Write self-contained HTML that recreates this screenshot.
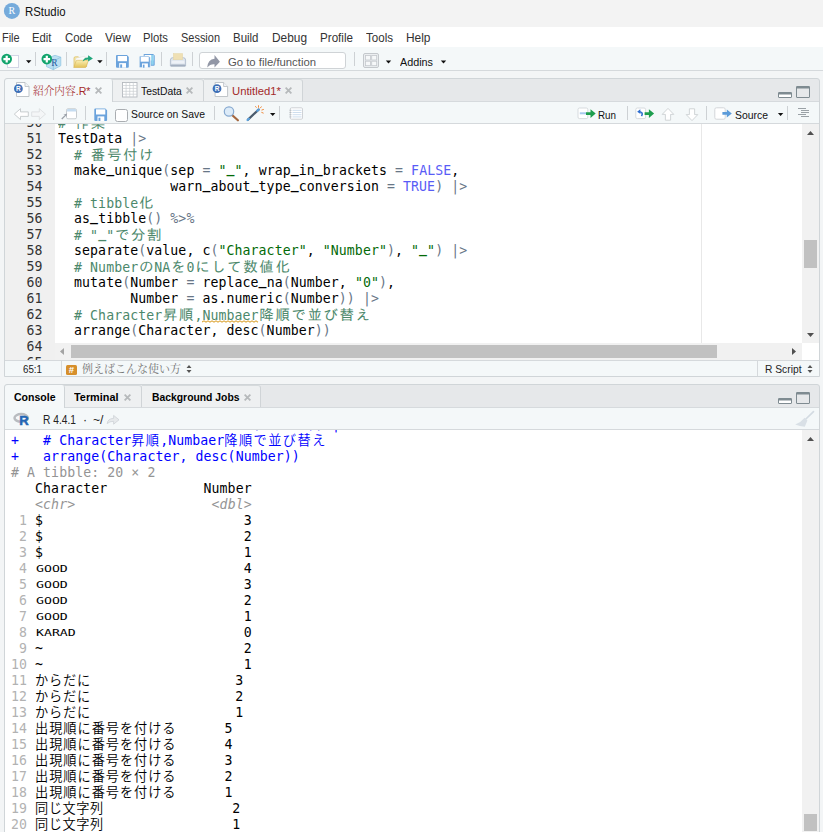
<!DOCTYPE html>
<html lang="ja">
<head>
<meta charset="utf-8">
<title>RStudio</title>
<style>
*{box-sizing:border-box;margin:0;padding:0}
html,body{width:823px;height:832px;overflow:hidden;background:#f3f5f6}
body{position:relative;font-family:"Liberation Sans","Noto Sans CJK JP",sans-serif;font-size:12px;color:#000}
.a,.t{position:absolute}
.t{white-space:nowrap}
#title{left:0;top:0;width:823px;height:27px;background:#f3f3f3}
#menu{left:0;top:27px;width:823px;height:20px;background:#fff}
#tbar{left:0;top:47px;width:823px;height:24px;background:#f4f8f9;border-bottom:1px solid #d5d9dc}
.sep{position:absolute;width:1px;background:#cdd1d4}
.panel{position:absolute;border:1px solid #d0d5d8;border-radius:3px 3px 0 0;background:#e6e8ea}
.tabA{position:absolute;background:#f5f8f9;border-right:1px solid #cfd4d7;border-radius:3px 3px 0 0}
.tabI{position:absolute;background:#eef0f1;border-right:1px solid #d0d4d7;border-top:1px solid #d6dadc;border-radius:0 3px 0 0}.hl{position:absolute;left:5px;width:814px;height:1px;background:#d6dadd}
.ptb{position:absolute;background:#f4f8f9;border-bottom:1px solid #d5d9dc}
.x{position:absolute;font-size:13px;color:#b0b3b6;line-height:14px;font-family:"Liberation Sans",sans-serif}
#ed{left:5px;top:124px;width:814px;height:236px;background:#fff;overflow:hidden}
#gut{left:0;top:0;width:49.700px;height:236px;background:#f0f0f0}
#gut div{position:absolute;left:0;width:37.500px;text-align:right;height:16px;line-height:16px;color:#333}
#code{left:53px;top:0;width:744px;height:220px;overflow:hidden}
#code div{position:absolute;left:0;height:16px;line-height:16px}
.mono{font-family:"DejaVu Sans Mono","Liberation Mono","IPAGothic",monospace;font-size:13.2px;white-space:pre;letter-spacing:0.083px}
.c{color:#4c886b}.s{color:#036a07}.k{color:#585cf6}.o{color:#687687}
.j{display:inline-block;width:16.060px;text-align:center;font-family:"IPAGothic",monospace;font-size:14.500px;letter-spacing:0}
.u{position:relative;top:-2.500px;font-weight:bold}.sq{position:relative}.sq svg{position:absolute;left:0;top:12.200px}
#con{left:5px;top:430px;width:797px;height:402px;background:#fff;overflow:hidden;font-family:"DejaVu Sans Mono","Liberation Mono","Noto Sans CJK JP",monospace;font-size:13.2px;letter-spacing:0.083px}
#con div{position:absolute;left:6px;height:16px;line-height:16px;white-space:pre}
.b{color:#0000ff}.g{color:#949494}.g2{color:#b2b2b2}.i{font-style:italic}
.w{display:inline-block;letter-spacing:0}.w span{display:inline-block;font-size:9.300px;letter-spacing:0;transform:scaleX(1.420);transform-origin:0 50%;position:relative;top:-1px;left:.5px;}
.jc{letter-spacing:0.750px;font-weight:350}
</style>
</head>
<body>
<div id="title" class="a">
  <svg class="a" style="left:3px;top:2px" width="18" height="18" viewBox="0 0 18 18"><circle cx="8.900" cy="8.900" r="8" fill="#75aadb"/><text x="8.900" y="12.300" font-family="'Liberation Serif',serif" font-size="10" fill="#fff" text-anchor="middle">R</text></svg>
</div>
<div id="menu" class="a"></div>
<div id="tbar" class="a">
  <div class="sep" style="left:35px;top:5px;height:14px"></div>
  <div class="sep" style="left:66px;top:5px;height:14px"></div>
  <div class="sep" style="left:106px;top:5px;height:14px"></div>
  <div class="sep" style="left:161px;top:5px;height:14px"></div>
  <div class="sep" style="left:192px;top:5px;height:14px"></div>
  <div class="a" style="left:199px;top:5px;width:147px;height:17px;background:#fff;border:1px solid #cfd3d6;border-radius:3px"></div>
  <div class="sep" style="left:354px;top:5px;height:14px"></div>
</div>

<!-- source panel -->
<div class="panel" style="left:4px;top:78px;width:816px;height:299px"></div>
<div class="hl" style="top:101px"></div>
<div class="tabI" style="left:112px;top:79px;width:92px;height:22px"></div>
<div class="tabI" style="left:204px;top:79px;width:99px;height:22px"></div>
<div class="tabA" style="left:5px;top:79px;width:108px;height:23px"></div>
<svg class="a" style="left:95.3px;top:86.7px" width="7" height="7"><path d="M.6 .6l5.800 5.800M6.400 .6l-5.800 5.800" stroke="#b6b9bb" stroke-width="1.800"/></svg>
<svg class="a" style="left:186.3px;top:86.7px" width="7" height="7"><path d="M.6 .6l5.800 5.800M6.400 .6l-5.800 5.800" stroke="#b6b9bb" stroke-width="1.800"/></svg>
<svg class="a" style="left:285.3px;top:86.7px" width="7" height="7"><path d="M.6 .6l5.800 5.800M6.400 .6l-5.800 5.800" stroke="#b6b9bb" stroke-width="1.800"/></svg>
<div class="ptb" style="left:5px;top:102px;width:814px;height:22px">
  <div class="sep" style="left:48px;top:4px;height:14px"></div>
  <div class="sep" style="left:80px;top:4px;height:14px"></div>
  <div class="sep" style="left:209px;top:4px;height:14px"></div>
  <div class="sep" style="left:274.400px;top:4px;height:14px"></div>
  <div class="sep" style="left:622px;top:4px;height:14px"></div>
  <div class="sep" style="left:701px;top:4px;height:14px"></div>
  <div class="sep" style="left:782px;top:4px;height:14px"></div>
  <div class="a" style="left:110.400px;top:7.400px;width:12.400px;height:12.400px;background:#fff;border:1px solid #a9adb1;border-radius:2.500px"></div>
</div>
<div id="ed" class="a">
  <div id="gut" class="a mono">
<div style="top:-9px">50</div>
<div style="top:7px">51</div>
<div style="top:23px">52</div>
<div style="top:39px">53</div>
<div style="top:55px">54</div>
<div style="top:71px">55</div>
<div style="top:87px">56</div>
<div style="top:103px">57</div>
<div style="top:119px">58</div>
<div style="top:135px">59</div>
<div style="top:151px">60</div>
<div style="top:167px">61</div>
<div style="top:183px">62</div>
<div style="top:199px">63</div>
<div style="top:215px">64</div>
<div style="top:231px">65</div>
  </div>
  <div class="a" style="left:695.600px;top:0;width:1px;height:220px;background:#e8e8e8"></div>
  <div id="code" class="a mono">
<div style="top:-9px"><span class="c"># <span class="j">作</span><span class="j">業</span></span></div>
<div style="top:7px">TestData <span class="o">|&gt;</span></div>
<div style="top:23px">  <span class="c"># <span class="j">番</span><span class="j">号</span><span class="j">付</span><span class="j">け</span></span></div>
<div style="top:39px">  make<span class="u">_</span>unique<span class="o">(</span>sep <span class="o">=</span> <span class="s">"<span class="u">_</span>"</span>, wrap<span class="u">_</span>in<span class="u">_</span>brackets <span class="o">=</span> <span class="k">FALSE</span>,</div>
<div style="top:55px">              warn<span class="u">_</span>about<span class="u">_</span>type<span class="u">_</span>conversion <span class="o">=</span> <span class="k">TRUE</span><span class="o">)</span> <span class="o">|&gt;</span></div>
<div style="top:71px">  <span class="c"># tibble<span class="j">化</span></span></div>
<div style="top:87px">  as<span class="u">_</span>tibble<span class="o">()</span> <span class="o">%&gt;%</span></div>
<div style="top:103px">  <span class="c"># "<span class="u">_</span>"<span class="j">で</span><span class="j">分</span><span class="j">割</span></span></div>
<div style="top:119px">  separate<span class="o">(</span>value, c<span class="o">(</span><span class="s">"Character"</span>, <span class="s">"Number"</span><span class="o">)</span>, <span class="s">"<span class="u">_</span>"</span><span class="o">)</span> <span class="o">|&gt;</span></div>
<div style="top:135px">  <span class="c"># Number<span class="j">の</span>NA<span class="j">を</span>0<span class="j">に</span><span class="j">し</span><span class="j">て</span><span class="j">数</span><span class="j">値</span><span class="j">化</span></span></div>
<div style="top:151px">  mutate<span class="o">(</span>Number <span class="o">=</span> replace<span class="u">_</span>na<span class="o">(</span>Number, <span class="s">"0"</span><span class="o">)</span>,</div>
<div style="top:167px">         Number <span class="o">=</span> as.numeric<span class="o">(</span>Number<span class="o">))</span> <span class="o">|&gt;</span></div>
<div style="top:183px">  <span class="c"># Character<span class="j">昇</span><span class="j">順</span>,<span class="sq">Numbaer<svg width="57" height="4"><path d="M0 2L2 0.8L4 2.2L6 0.8L8 2.2L10 0.8L12 2.2L14 0.8L16 2.2L18 0.8L20 2.2L22 0.8L24 2.2L26 0.8L28 2.2L30 0.8L32 2.2L34 0.8L36 2.2L38 0.8L40 2.2L42 0.8L44 2.2L46 0.8L48 2.2L50 0.8L52 2.2L54 0.8L56 2.2" fill="none" stroke="#dda83c" stroke-width="1.100"/></svg></span><span class="j">降</span><span class="j">順</span><span class="j">で</span><span class="j">並</span><span class="j">び</span><span class="j">替</span><span class="j">え</span></span></div>
<div style="top:199px">  arrange<span class="o">(</span>Character, desc<span class="o">(</span>Number<span class="o">))</span></div>
<div style="top:231px"><span class="c"># <span class="j">例</span><span class="j">え</span><span class="j">ば</span><span class="j">こ</span><span class="j">ん</span><span class="j">な</span><span class="j">使</span><span class="j">い</span><span class="j">方</span> ----</span></div>
  </div>
  <!-- h scrollbar -->
  <div class="a" style="left:50px;top:219px;width:747px;height:17px;background:#f1f1f1"></div>
  <div class="a" style="left:66px;top:221px;width:646px;height:13px;background:#c1c1c1"></div>
  <svg class="a" style="left:49px;top:219px" width="17" height="17"><path d="M6 8.5 L10 5 L10 12 Z" fill="#a3a3a3"/></svg>
  <svg class="a" style="left:780px;top:219px" width="17" height="17"><path d="M11 8.5 L7 5 L7 12 Z" fill="#505050"/></svg>
  <!-- v scrollbar -->
  <div class="a" style="left:797px;top:0;width:17px;height:219px;background:#f1f1f1"></div>
  <div class="a" style="left:799px;top:116px;width:13px;height:28px;background:#c1c1c1"></div>
  <svg class="a" style="left:797px;top:1px" width="17" height="17"><path d="M8.5 6 L12 10 L5 10 Z" fill="#505050"/></svg>
  <svg class="a" style="left:797px;top:202px" width="17" height="17"><path d="M8.5 11 L12 7 L5 7 Z" fill="#505050"/></svg>
  <div class="a" style="left:797px;top:219px;width:17px;height:17px;background:#fff"></div>
</div>
<!-- status bar -->
<div class="a" style="left:5px;top:360px;width:814px;height:16px;background:#f4f8f9;border-top:1px solid #d5d9dc"></div>
<div class="sep" style="left:61px;top:361px;height:15px;background:#d5d9dc"></div>
<div class="sep" style="left:757px;top:361px;height:15px;background:#d5d9dc"></div>
<div class="a" style="left:66px;top:364.500px;width:11px;height:10.500px;background:#d68f2b;border-radius:1.500px;color:#fff;font-size:9.500px;line-height:10.500px;text-align:center;font-weight:bold">#</div>

<!-- console panel -->
<div class="panel" style="left:4px;top:384px;width:816px;height:460px"></div>
<div class="hl" style="top:407px"></div>
<div class="tabI" style="left:64px;top:385px;width:78px;height:22px"></div>
<div class="tabI" style="left:142px;top:385px;width:119px;height:22px"></div>
<div class="tabA" style="left:5px;top:385px;width:60px;height:23px"></div>
<svg class="a" style="left:124.3px;top:393.8px" width="7" height="7"><path d="M.6 .6l5.800 5.800M6.400 .6l-5.800 5.800" stroke="#b6b9bb" stroke-width="1.800"/></svg>
<svg class="a" style="left:244.3px;top:393.8px" width="7" height="7"><path d="M.6 .6l5.800 5.800M6.400 .6l-5.800 5.800" stroke="#b6b9bb" stroke-width="1.800"/></svg>
<div class="ptb" style="left:5px;top:408px;width:814px;height:22px"></div>
<div id="con" class="a">
<div style="top:-13px"><span class="b">+          Number = as.numeric(Number)) |&gt;</span></div>
<div style="top:3px"><span class="b">+   # Character<span class="jc" style="letter-spacing:1.2px">昇順</span>,Numbaer<span class="jc" style="letter-spacing:1.45px">降順で並び替え</span></span></div>
<div style="top:19px"><span class="b">+   arrange(Character, desc(Number))</span></div>
<div style="top:35px"><span class="g"># A tibble: 20 × 2</span></div>
<div style="top:51px">   Character            Number</div>
<div style="top:67px">   <span class="g"><span class="i">&lt;chr&gt;</span></span>                 <span class="g"><span class="i">&lt;dbl&gt;</span></span></div>
<div style="top:83px"><span class="g2"> 1</span> $                         3</div>
<div style="top:99px"><span class="g2"> 2</span> $                         2</div>
<div style="top:115px"><span class="g2"> 3</span> $                         1</div>
<div style="top:131px"><span class="g2"> 4</span> <span class="w" style="width:32.12px"><span>GOOD</span></span>                      4</div>
<div style="top:147px"><span class="g2"> 5</span> <span class="w" style="width:32.12px"><span>GOOD</span></span>                      3</div>
<div style="top:163px"><span class="g2"> 6</span> <span class="w" style="width:32.12px"><span>GOOD</span></span>                      2</div>
<div style="top:179px"><span class="g2"> 7</span> <span class="w" style="width:32.12px"><span>GOOD</span></span>                      1</div>
<div style="top:195px"><span class="g2"> 8</span> <span class="w" style="width:40.15px"><span>KARAD</span></span>                     0</div>
<div style="top:211px"><span class="g2"> 9</span> ~                         2</div>
<div style="top:227px"><span class="g2">10</span> ~                         1</div>
<div style="top:243px"><span class="g2">11</span> <span class="jc" style="letter-spacing:0.75px">からだに</span>                  3</div>
<div style="top:259px"><span class="g2">12</span> <span class="jc" style="letter-spacing:0.75px">からだに</span>                  2</div>
<div style="top:275px"><span class="g2">13</span> <span class="jc" style="letter-spacing:0.75px">からだに</span>                  1</div>
<div style="top:291px"><span class="g2">14</span> <span class="jc" style="letter-spacing:0.95px">出現順に番号を付ける</span>      5</div>
<div style="top:307px"><span class="g2">15</span> <span class="jc" style="letter-spacing:0.95px">出現順に番号を付ける</span>      4</div>
<div style="top:323px"><span class="g2">16</span> <span class="jc" style="letter-spacing:0.95px">出現順に番号を付ける</span>      3</div>
<div style="top:339px"><span class="g2">17</span> <span class="jc" style="letter-spacing:0.95px">出現順に番号を付ける</span>      2</div>
<div style="top:355px"><span class="g2">18</span> <span class="jc" style="letter-spacing:0.95px">出現順に番号を付ける</span>      1</div>
<div style="top:371px"><span class="g2">19</span> <span class="jc" style="letter-spacing:0.55px">同じ文字列</span>                2</div>
<div style="top:387px"><span class="g2">20</span> <span class="jc" style="letter-spacing:0.55px">同じ文字列</span>                1</div>
</div>
<div class="a" style="left:802px;top:430px;width:17px;height:402px;background:#f1f1f1"></div>
<svg class="a" style="left:802px;top:431px" width="17" height="17"><path d="M8.5 6 L12 10 L5 10 Z" fill="#505050"/></svg>
<div class="a" style="left:804px;top:814px;width:13px;height:17px;background:#c1c1c1"></div>
<!-- main toolbar icons -->
<svg class="a" style="left:0;top:47px" width="460" height="24" viewBox="0 47 460 24">
  <defs><linearGradient id="fg" x1="0" y1="0" x2="0" y2="1"><stop offset="0" stop-color="#faefb4"/><stop offset="1" stop-color="#e3c258"/></linearGradient></defs>
  <!-- new file -->
  <rect x="7.5" y="55.5" width="11" height="12" fill="#fff" stroke="#d3d6e6"/>
  <circle cx="6.700" cy="59.100" r="5.300" fill="#10a46c"/>
  <path d="M3.400 59.100H10M6.700 55.800V62.400" stroke="#fff" stroke-width="2.200"/>
  <path d="M26 60.3h5.4l-2.7 3z" fill="#111"/>
  <!-- new project -->
  <path d="M46.500 58.500l8.500-3.200 5.800 1.900v8.500l-7.500 4-6.800-3.100z" fill="#b9dff2" stroke="#84bfe0" stroke-width=".7" opacity=".92"/>
  <path d="M46.500 58.500l6.800 2.700 7.500-4M53.300 61.200v8.500" stroke="#84bfe0" stroke-width=".7" fill="none"/>
  <text x="51.200" y="65.600" font-family="'Liberation Serif',serif" font-size="9.500" fill="#2a5da3">R</text>
  <circle cx="46.800" cy="59.100" r="5.300" fill="#10a46c"/>
  <path d="M43.500 59.100H50.100M46.800 55.800V62.400" stroke="#fff" stroke-width="2.200"/>
  <!-- open folder -->
  <path d="M74 66.500v-8.300q0-1.400 1.400-1.400h3l1.300 1.300h5.700q1.200 0 1.200 1.200v7.200z" fill="#f6e9ac" stroke="#d9ba5c" stroke-width=".7"/>
  <path d="M76 58.200l8.800-2 1.700 9.300h-10.500z" fill="#fbfbfb" stroke="#d8d8d8" stroke-width=".4"/>
  <path d="M73.700 67.500l2.400-6.500q.3-.7 1.100-.7h10.300q.9 0 .6.900l-2 5.700q-.2.600-1 .6z" fill="url(#fg)" stroke="#d8b450" stroke-width=".6"/>
  <path d="M82.700 61.400q.9-3.900 5.400-4v-2.100l4.800 3.100-4.800 3.100v-2q-3.200-.1-5.400 1.900z" fill="#1fa67b"/>
  <path d="M97.200 60.300h5.400l-2.700 3z" fill="#111"/>
  <!-- save -->
  <g><path d="M116 56.100q0-1 1-1h10l1.800 1.800v9.800q0 1-1 1h-10.800q-1 0-1-1z" fill="#6ba3dc"/><rect x="117.700" y="56" width="9.300" height="5.200" fill="#fff"/><rect x="119.200" y="63.100" width="6.800" height="4.600" fill="#fff"/><rect x="120.200" y="64.400" width="1.900" height="3.300" fill="#6ba3dc"/></g>
  <!-- save all -->
  <path d="M143.500 55q0-1 1-1h8.600l1.600 1.600v9.200q0 1-1 1h-9.200q-1 0-1-1z" fill="#6ba3dc"/>
  <rect x="145" y="55" width="8.500" height="5.500" fill="#fff"/>
  <rect x="151.200" y="55" width="2.500" height="9.800" fill="#8fd3ef"/>
  <g transform="translate(139.200,56) scale(.87,.93) translate(-116,-55.100)"><path d="M116 56.100q0-1 1-1h10l1.800 1.800v9.800q0 1-1 1h-10.800q-1 0-1-1z" fill="#6ba3dc" stroke="#f4f8f9" stroke-width=".9"/><rect x="117.700" y="56" width="9.300" height="5.200" fill="#fff"/><rect x="119.200" y="63.100" width="6.800" height="4.600" fill="#fff"/><rect x="120.200" y="64.400" width="1.900" height="3.300" fill="#6ba3dc"/></g>
  <!-- print -->
  <path d="M170.400 66v-6q0-2.300 2.300-2.300h10.600q2.300 0 2.300 2.300v6z" fill="#dde4ed" stroke="#aab6c7" stroke-width=".8"/>
  <rect x="173.300" y="53.500" width="9.400" height="6.300" fill="#efe0b4" stroke="#e2d2a2" stroke-width=".4"/>
  <rect x="171.600" y="60.800" width="12.800" height="2.600" rx="1" fill="#eef2f7"/>
  <rect x="170.800" y="64.600" width="14.400" height="2" rx=".6" fill="#a3afc0"/>
  <!-- goto arrow -->
  <path d="M207.200 67.600Q207.800 59.400 214.500 58.800V54.900L219.900 61.800L214.500 67.400V64.200Q210 63.900 207.200 67.600Z" fill="#9297a6"/>
  <!-- grid -->
  <rect x="363.5" y="53.5" width="15" height="14" rx="1.5" fill="#eceff1" stroke="#c4c8cc"/>
  <rect x="365.5" y="55.5" width="5" height="4.500" fill="#f6f8f9" stroke="#c4c8cc" stroke-width=".8"/>
  <rect x="371.700" y="55.5" width="5" height="4.500" fill="#f6f8f9" stroke="#c4c8cc" stroke-width=".8"/>
  <rect x="365.5" y="61.200" width="5" height="4.500" fill="#f6f8f9" stroke="#c4c8cc" stroke-width=".8"/>
  <rect x="371.700" y="61.200" width="5" height="4.500" fill="#f6f8f9" stroke="#c4c8cc" stroke-width=".8"/>
  <path d="M385.800 60.400h5.400l-2.700 3z" fill="#111"/>
  <path d="M440.800 60.400h5.400l-2.700 3z" fill="#111"/>
</svg>
<!-- source tab icons -->
<svg class="a" style="left:0;top:78px" width="823" height="48" viewBox="0 78 823 48">
  <!-- Rdoc icon 1 -->
  <g id="rdoc">
  <path d="M16.500 82.500h8.500l4 4v10h-12.500z" fill="#fff" stroke="#b9bec3" stroke-width=".9"/>
  <path d="M25 82.500v4h4" fill="#f1f3f5" stroke="#b9bec3" stroke-width=".8"/>
  <circle cx="18.400" cy="88.700" r="4.400" fill="#3e6fb6"/>
  <text x="18.400" y="91.200" font-family="'Liberation Sans',sans-serif" font-weight="bold" font-size="6.500" fill="#fff" text-anchor="middle">R</text>
  </g>
  <g transform="translate(198.600,0)">
  <path d="M16.500 82.500h8.500l4 4v10h-12.500z" fill="#fff" stroke="#b9bec3" stroke-width=".9"/>
  <path d="M25 82.500v4h4" fill="#f1f3f5" stroke="#b9bec3" stroke-width=".8"/>
  <circle cx="18.400" cy="88.700" r="4.400" fill="#3e6fb6"/>
  <text x="18.400" y="91.200" font-family="'Liberation Sans',sans-serif" font-weight="bold" font-size="6.500" fill="#fff" text-anchor="middle">R</text>
  </g>
  <!-- grid icon -->
  <rect x="122.500" y="82.500" width="14.500" height="14.500" fill="#fff" stroke="#b4b9be" stroke-width=".9"/>
  <path d="M122.500 85.500h14.500M122.500 88.400h14.500M122.500 91.300h14.500M122.500 94.200h14.500M126.100 82.500v14.500M129.700 82.500v14.500M133.300 82.500v14.500" stroke="#c9cdd1" stroke-width=".7"/>
  <!-- min / max -->
  <g id="mm" fill="none" stroke="#7f8b91">
  <rect x="778.500" y="92.500" width="13" height="5" rx=".4" fill="#fff"/><path d="M778.500 93.500h13" stroke-width="2"/>
  <rect x="796.500" y="86.500" width="13" height="11" rx=".4"/><path d="M796.500 87.500h13" stroke-width="2"/>
  </g>
  <!-- back / fwd -->
  <path d="M14.300 114.100l6.200-5.400v3.200h7.800v4.500h-7.800v3.200z" fill="#fff" stroke="#c3c7ca" stroke-width=".9"/>
  <path d="M45.500 114.100l-6.200-5.400v3.200h-7.600v4.500h7.600v3.200z" fill="#f4f6f7" stroke="#dcdfe1" stroke-width=".9"/>
  <!-- show in new window -->
  <rect x="66.500" y="108.800" width="10" height="10" rx="1.500" fill="#fff" stroke="#c1c6cb" stroke-width=".9"/>
  <path d="M67 111.500v-1.200q0-1.300 1.300-1.300h6.400q1.300 0 1.300 1.300v1.200z" fill="#c5dcf0"/>
  <path d="M61.300 118.600l3.700-3.700-1.800-.1 4-1.200-1.100 4-.2-1.800-3.700 3.700z" fill="#9aa0a8"/>
  <!-- save -->
  <g transform="translate(-21.700,53.300)"><path d="M116 56.100q0-1 1-1h10l1.800 1.800v9.800q0 1-1 1h-10.800q-1 0-1-1z" fill="#6ba3dc"/><rect x="117.700" y="56" width="9.300" height="5.200" fill="#fff"/><rect x="119.200" y="63.100" width="6.800" height="4.600" fill="#fff"/><rect x="120.200" y="64.400" width="1.900" height="3.300" fill="#6ba3dc"/></g>
  <!-- magnifier -->
  <path d="M232.300 115.300l5.600 5" stroke="#a5673f" stroke-width="2.200" stroke-linecap="round"/>
  <circle cx="229" cy="111.500" r="4.700" fill="#dcebf8" stroke="#86a9d0" stroke-width="1.200"/>
  <!-- wand -->
  <path d="M248 119.600l10.600-10" stroke="#4b5b6c" stroke-width="2.200" stroke-linecap="round"/>
  <path d="M247.600 120l1.300-1.200M257.300 110.800l1.300-1.200" stroke="#5aa0dc" stroke-width="2.200" stroke-linecap="round"/>
  <path d="M258.500 105.300v2.400M261.500 106.500l-1.300 1.700M263.800 109.400l-2.300.7M263.600 113.200l-2.200-.9M255.300 106.200l1.200 1.500" stroke="#f08a3c" stroke-width="1"/>
  <path d="M270 113h5.400l-2.700 3z" fill="#111"/>
  <!-- list icon -->
  <rect x="290.300" y="107.800" width="12.200" height="11.400" rx="1.200" fill="#fff" stroke="#c9cdd1" stroke-width=".9"/>
  <path d="M292.500 110.300h9M292.500 112.500h9M292.500 114.700h9M292.500 116.900h9" stroke="#c2d6ea" stroke-width=".8"/>
  <path d="M289.500 110.300h2M289.500 112.500h2M289.500 114.700h2M289.500 116.900h2" stroke="#b0b5ba" stroke-width=".8"/>
  <!-- run -->
  <rect x="578" y="108" width="9.800" height="10.600" rx="1.500" fill="#fff" stroke="#d3d7da" stroke-width=".9"/>
  <rect x="579.800" y="112.300" width="6.500" height="2" fill="#a8c9ee"/>
  <path d="M586 112.200h4.500v-2.900l5.200 4.300-5.200 4.300v-2.900h-4.500z" fill="#1e9e4e"/>
  <!-- rerun -->
  <rect x="635.800" y="108" width="9.800" height="10.600" rx="1.500" fill="#fff" stroke="#d3d7da" stroke-width=".9"/>
  <path d="M641.500 116.200q2.200-3.800-2-4.400" fill="none" stroke="#2f6fd0" stroke-width="1.600"/>
  <path d="M640.300 109.300l-3.200 2.400 3.400 2.200z" fill="#2f6fd0"/>
  <path d="M644.600 112.200h4.300v-2.900l5.200 4.300-5.200 4.300v-2.900h-4.300z" fill="#1e9e4e"/>
  <!-- up / down -->
  <path d="M668 108.400l5.800 6h-3.200v5.800h-5.200v-5.800h-3.200z" fill="#fff" stroke="#ccd0d3" stroke-width=".9"/>
  <path d="M692 120.600l5.800-6h-3.200v-5.800h-5.200v5.800h-3.200z" fill="#fff" stroke="#ccd0d3" stroke-width=".9"/>
  <!-- source -->
  <rect x="714.800" y="107.800" width="10.400" height="11.400" rx="1.500" fill="#fff" stroke="#cfd3d6" stroke-width=".9"/>
  <path d="M722.400 112.100h4.400v-2.700l5 4-5 4v-2.700h-4.400z" fill="#5b9bd9"/>
  <path d="M777.900 113.100h5.400l-2.700 3z" fill="#111"/>
  <path d="M798 108.500h8M801 110.500h8M801 112.500h8M798 114.500h8M801 116.500h8" stroke="#9aa1a6" stroke-width="1"/>
</svg>
<!-- status bar arrows -->
<svg class="a" style="left:185.300px;top:362px" width="8" height="14"><path d="M1.500 6l2.500-3 2.500 3zM1.500 8l2.500 3 2.500-3z" fill="#555"/></svg>
<svg class="a" style="left:806px;top:362px" width="8" height="14"><path d="M1.500 6l2.500-3 2.500 3zM1.500 8l2.500 3 2.500-3z" fill="#555"/></svg>
<!-- console icons -->
<svg class="a" style="left:0;top:384px" width="823" height="48" viewBox="0 384 823 48">
  <g fill="none" stroke="#7f8b91">
  <rect x="778.500" y="398.500" width="13" height="5" rx=".4" fill="#fff"/><path d="M778.500 399.500h13" stroke-width="2"/>
  <rect x="796.500" y="392.500" width="13" height="11" rx=".4"/><path d="M796.500 393.500h13" stroke-width="2"/>
  </g>
  <ellipse cx="21.200" cy="417.900" rx="6.700" ry="3.800" fill="none" stroke="#b9bcc0" stroke-width="2.500"/>
  <text x="19.200" y="425.400" font-family="'Liberation Sans',sans-serif" font-weight="bold" font-size="13" fill="#2165b6" stroke="#2165b6" stroke-width=".5">R</text>
  <path d="M107.200 423.600q.5-5 6.400-5.200v-3l5.400 4.400-5.400 4.400v-2.900q-4-.1-6.400 2.300z" fill="#e6e9eb" stroke="#cdd1d5" stroke-width=".8"/>
  <!-- broom -->
  <path d="M813.500 411.600l-7.600 7.400" stroke="#d3dbe2" stroke-width="1.700" stroke-linecap="round"/>
  <path d="M804.600 417.700l2.800 2.800-2.600 6.300q-5-.2-9.600-2.200q5.800-2.300 9.400-6.900z" fill="#d9e0e6"/>
</svg>

<span class="t" style="left:25.3px;top:2.1999999999999993px;height:20px;line-height:20px;font-size:12.6px;color:#111;font-family:'Liberation Sans','Noto Sans CJK JP',sans-serif;transform:scaleX(0.9038);transform-origin:0 50%;">RStudio</span>
<span class="t" style="left:2.4px;top:27.6px;height:20px;line-height:20px;font-size:12.8px;color:#333;font-family:'Liberation Sans','Noto Sans CJK JP',sans-serif;transform:scaleX(0.8533);transform-origin:0 50%;">File</span>
<span class="t" style="left:32.3px;top:27.6px;height:20px;line-height:20px;font-size:12.8px;color:#333;font-family:'Liberation Sans','Noto Sans CJK JP',sans-serif;transform:scaleX(0.8839);transform-origin:0 50%;">Edit</span>
<span class="t" style="left:65px;top:27.6px;height:20px;line-height:20px;font-size:12.8px;color:#333;font-family:'Liberation Sans','Noto Sans CJK JP',sans-serif;transform:scaleX(0.8923);transform-origin:0 50%;">Code</span>
<span class="t" style="left:105px;top:27.6px;height:20px;line-height:20px;font-size:12.8px;color:#333;font-family:'Liberation Sans','Noto Sans CJK JP',sans-serif;transform:scaleX(0.9267);transform-origin:0 50%;">View</span>
<span class="t" style="left:143.4px;top:27.6px;height:20px;line-height:20px;font-size:12.8px;color:#333;font-family:'Liberation Sans','Noto Sans CJK JP',sans-serif;transform:scaleX(0.8786);transform-origin:0 50%;">Plots</span>
<span class="t" style="left:181px;top:27.6px;height:20px;line-height:20px;font-size:12.8px;color:#333;font-family:'Liberation Sans','Noto Sans CJK JP',sans-serif;transform:scaleX(0.8566);transform-origin:0 50%;">Session</span>
<span class="t" style="left:233px;top:27.6px;height:20px;line-height:20px;font-size:12.8px;color:#333;font-family:'Liberation Sans','Noto Sans CJK JP',sans-serif;transform:scaleX(0.8957);transform-origin:0 50%;">Build</span>
<span class="t" style="left:272px;top:27.6px;height:20px;line-height:20px;font-size:12.8px;color:#333;font-family:'Liberation Sans','Noto Sans CJK JP',sans-serif;transform:scaleX(0.9279);transform-origin:0 50%;">Debug</span>
<span class="t" style="left:320px;top:27.6px;height:20px;line-height:20px;font-size:12.8px;color:#333;font-family:'Liberation Sans','Noto Sans CJK JP',sans-serif;transform:scaleX(0.9096);transform-origin:0 50%;">Profile</span>
<span class="t" style="left:366px;top:27.6px;height:20px;line-height:20px;font-size:12.8px;color:#333;font-family:'Liberation Sans','Noto Sans CJK JP',sans-serif;transform:scaleX(0.9038);transform-origin:0 50%;">Tools</span>
<span class="t" style="left:406px;top:27.6px;height:20px;line-height:20px;font-size:12.8px;color:#333;font-family:'Liberation Sans','Noto Sans CJK JP',sans-serif;transform:scaleX(0.9306);transform-origin:0 50%;">Help</span>
<span class="t" style="left:228px;top:51.6px;height:20px;line-height:20px;font-size:11px;color:#555;font-family:'Liberation Sans','Noto Sans CJK JP',sans-serif;transform:scaleX(1.0279);transform-origin:0 50%;">Go to file/function</span>
<span class="t" style="left:400px;top:51.8px;height:20px;line-height:20px;font-size:11px;color:#111;font-family:'Liberation Sans','Noto Sans CJK JP',sans-serif;transform:scaleX(0.9810);transform-origin:0 50%;">Addins</span>
<span class="t" style="left:33px;top:81px;height:20px;line-height:20px;font-size:11px;color:#a32a2a;font-family:'Liberation Sans','Noto Serif CJK SC',serif;transform:scaleX(0.9700);transform-origin:0 50%;font-weight:300;">紹介内容.R*</span>
<span class="t" style="left:140.6px;top:81px;height:20px;line-height:20px;font-size:11px;color:#111;font-family:'Liberation Sans','Noto Sans CJK JP',sans-serif;transform:scaleX(0.9419);transform-origin:0 50%;">TestData</span>
<span class="t" style="left:232.4px;top:81px;height:20px;line-height:20px;font-size:11px;color:#a32a2a;font-family:'Liberation Sans','Noto Sans CJK JP',sans-serif;transform:scaleX(1.0251);transform-origin:0 50%;">Untitled1*</span>
<span class="t" style="left:131px;top:103.5px;height:20px;line-height:20px;font-size:11px;color:#111;font-family:'Liberation Sans','Noto Sans CJK JP',sans-serif;transform:scaleX(0.9453);transform-origin:0 50%;">Source on Save</span>
<span class="t" style="left:598px;top:104.5px;height:20px;line-height:20px;font-size:11px;color:#111;font-family:'Liberation Sans','Noto Sans CJK JP',sans-serif;transform:scaleX(0.8916);transform-origin:0 50%;">Run</span>
<span class="t" style="left:735px;top:104.5px;height:20px;line-height:20px;font-size:11px;color:#111;font-family:'Liberation Sans','Noto Sans CJK JP',sans-serif;transform:scaleX(0.9467);transform-origin:0 50%;">Source</span>
<span class="t" style="left:22.5px;top:358.5px;height:20px;line-height:20px;font-size:10.8px;color:#222;font-family:'Liberation Sans','Noto Sans CJK JP',sans-serif;transform:scaleX(0.9041);transform-origin:0 50%;">65:1</span>
<span class="t" style="left:82px;top:358.5px;height:20px;line-height:20px;font-size:11px;color:#777;font-family:'Liberation Sans','Noto Serif CJK SC',serif;transform:scaleX(1.0000);transform-origin:0 50%;">例えばこんな使い方</span>
<span class="t" style="left:764.5px;top:358.5px;height:20px;line-height:20px;font-size:10.8px;color:#222;font-family:'Liberation Sans','Noto Sans CJK JP',sans-serif;transform:scaleX(0.9504);transform-origin:0 50%;">R Script</span>
<span class="t" style="left:13.5px;top:387px;height:20px;line-height:20px;font-size:11px;color:#000;font-family:'Liberation Sans','Noto Sans CJK JP',sans-serif;font-weight:bold;transform:scaleX(0.9561);transform-origin:0 50%;">Console</span>
<span class="t" style="left:74px;top:387px;height:20px;line-height:20px;font-size:11px;color:#000;font-family:'Liberation Sans','Noto Sans CJK JP',sans-serif;font-weight:bold;transform:scaleX(0.9882);transform-origin:0 50%;">Terminal</span>
<span class="t" style="left:151.5px;top:387px;height:20px;line-height:20px;font-size:11px;color:#000;font-family:'Liberation Sans','Noto Sans CJK JP',sans-serif;font-weight:bold;transform:scaleX(0.9418);transform-origin:0 50%;">Background Jobs</span>
<span class="t" style="left:42.6px;top:410.2px;height:20px;line-height:20px;font-size:12.2px;color:#222;font-family:'Liberation Sans','Noto Sans CJK JP',sans-serif;transform:scaleX(0.8372);transform-origin:0 50%;">R 4.4.1</span>
<span class="t" style="left:82.5px;top:410.2px;height:20px;line-height:20px;font-size:12.2px;color:#222;font-family:'Liberation Sans','Noto Sans CJK JP',sans-serif;transform:scaleX(1.0092);transform-origin:0 50%;">·</span>
<span class="t" style="left:93px;top:410.2px;height:20px;line-height:20px;font-size:12.2px;color:#222;font-family:'Liberation Sans','Noto Sans CJK JP',sans-serif;transform:scaleX(0.9985);transform-origin:0 50%;">~/</span>
</body>
</html>
